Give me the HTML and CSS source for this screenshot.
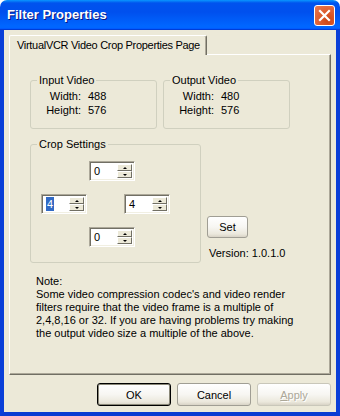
FILE: index.html
```html
<!DOCTYPE html>
<html>
<head>
<meta charset="utf-8">
<link rel="stylesheet" href="styles.css">
</head>
<body>
<div class="window">
  <div class="titlebar">
    <span class="title">Filter Properties</span>
    <span class="close">
      <svg width="21" height="21" viewBox="0 0 21 21">
        <path d="M6 6 L15 15 M15 6 L6 15" stroke="#fff" stroke-width="2.2" stroke-linecap="square"/>
      </svg>
    </span>
  </div>
  <div class="frame">
    <div class="client">
      <div class="tabs">
        <div class="tab">VirtualVCR Video Crop Properties Page</div>
      </div>
      <div class="panel">
        <div class="info-row">
          <fieldset class="group info">
            <legend>Input Video</legend>
            <div class="kv">
              <span class="k">Width:</span><span class="v">488</span>
              <span class="k">Height:</span><span class="v">576</span>
            </div>
          </fieldset>
          <fieldset class="group info">
            <legend>Output Video</legend>
            <div class="kv">
              <span class="k">Width:</span><span class="v">480</span>
              <span class="k">Height:</span><span class="v">576</span>
            </div>
          </fieldset>
        </div>
        <div class="crop-row">
          <fieldset class="group crop">
            <legend>Crop Settings</legend>
            <div class="spin-row center">
              <div class="spin"><span class="val">0</span><span class="arrows"><span class="arr up"></span><span class="arr down"></span></span></div>
            </div>
            <div class="spin-row sides">
              <div class="spin"><span class="val"><span class="sel">4</span></span><span class="arrows"><span class="arr up"></span><span class="arr down"></span></span></div>
              <div class="spin"><span class="val">4</span><span class="arrows"><span class="arr up"></span><span class="arr down"></span></span></div>
            </div>
            <div class="spin-row center">
              <div class="spin"><span class="val">0</span><span class="arrows"><span class="arr up"></span><span class="arr down"></span></span></div>
            </div>
          </fieldset>
          <div class="side">
            <button class="btn set">Set</button>
            <div class="version">Version: 1.0.1.0</div>
          </div>
        </div>
        <div class="note">
          Note:<br>
          Some video compression codec's and video render<br>
          filters require that the video frame is a multiple of<br>
          2,4,8,16 or 32. If you are having problems try making<br>
          the output video size a multiple of the above.
        </div>
      </div>
      <div class="buttons">
        <button class="btn dlg default">OK</button>
        <button class="btn dlg">Cancel</button>
        <button class="btn dlg disabled"><u>A</u>pply</button>
      </div>
    </div>
  </div>
</div>
</body>
</html>
```
FILE: styles.css
```css
* { box-sizing: border-box; }
html, body { margin: 0; padding: 0; }
body {
  font-family: "Liberation Sans", Arial, sans-serif;
  font-size: 11px;
  color: #000;
  background: #fff;
}
.window {
  width: 340px;
  height: 416px;
  display: flex;
  flex-direction: column;
}
.titlebar {
  height: 30px;
  flex: none;
  display: flex;
  align-items: center;
  justify-content: space-between;
  padding: 0 5px 0 7px;
  background: linear-gradient(180deg, #0997ff 0%, #0053ee 10%, #0050ee 40%, #0066ff 86%, #0066ff 92%, #005bff 95%, #003dd7 97%, #003dd7 100%);
  border-radius: 7px 7px 0 0;
}
.title {
  color: #fff;
  font-weight: bold;
  font-size: 13px;
  text-shadow: 1px 1px 0 #0a1883;
  padding-bottom: 1px;
}
.close {
  width: 21px;
  height: 21px;
  border: 1px solid #fff;
  border-radius: 3px;
  background: radial-gradient(circle at 70% 75%, #cc4614 0%, #dc5a2c 40%, #e97a52 100%);
  display: flex;
  margin-top: 1px;
}
.close svg { display: block; margin: -1px; }
.frame {
  flex: 1;
  display: flex;
  border-left: 4px solid #0a3fd8;
  border-right: 4px solid #0a3fd8;
  border-bottom: 4px solid #0a3cd2;
}
.client {
  flex: 1;
  background: #ece9d8;
  padding: 5px 5px 6px 5px;
  display: flex;
  flex-direction: column;
}
.tabs {
  display: flex;
  height: 19px;
  flex: none;
  position: relative;
  z-index: 2;
}
.tab {
  width: 198px;
  height: 20px;
  background: #ece9d8;
  border-top: 1px solid #fff;
  border-left: 1px solid #fff;
  border-right: 1px solid #716f64;
  box-shadow: inset -1px 0 0 #aca899;
  border-radius: 2px 2px 0 0;
  padding: 3px 0 0 7px;
  white-space: nowrap;
  letter-spacing: -0.3px;
}
.panel {
  flex: 1;
  border-top: 1px solid #fff;
  border-left: 1px solid #fff;
  border-right: 1px solid #716f64;
  border-bottom: 1px solid #716f64;
  box-shadow: inset -1px -1px 0 #aca899;
  padding: 19px 0 0 20px;
  display: flex;
  flex-direction: column;
}
.group {
  margin: 0;
  border: 1px solid #d0d0bf;
  border-radius: 3px;
  padding: 0;
  min-width: 0;
}
.group legend {
  padding: 0 2px;
  margin-left: 6px;
  line-height: 13px;
}
.info-row {
  display: flex;
  gap: 6px;
}
.info {
  width: 127px;
  height: 55px;
  padding-top: 2px;
}
.kv {
  display: grid;
  grid-template-columns: 50px auto;
  column-gap: 7px;
  line-height: 14px;
}
.k { text-align: right; }
.crop-row {
  display: flex;
  margin-top: 9px;
  gap: 6px;
}
.crop {
  width: 171px;
  height: 125px;
  padding-top: 10px;
}
.spin-row { display: flex; }
.spin-row.center { padding-left: 58px; }
.spin-row.sides { padding-left: 10px; gap: 37px; margin: 13px 0; }
.spin {
  width: 46px;
  height: 20px;
  background: #fff;
  display: flex;
  border-top: 1px solid #aca899;
  border-left: 1px solid #aca899;
  border-right: 1px solid #fff;
  border-bottom: 1px solid #fff;
  box-shadow: inset 1px 1px 0 #716f64, inset -1px -1px 0 #f1efe2;
  padding: 2px;
}
.val {
  flex: 1;
  line-height: 14px;
  padding-left: 2px;
}
.sel {
  background: #316ac5;
  color: #fff;
  padding: 0 1px;
  display: inline-block;
  line-height: 14px;
}
.arrows {
  width: 15px;
  display: flex;
  flex-direction: column;
}
.arr {
  flex: 1;
  background: #ece9d8;
  border-top: 1px solid #fff;
  border-left: 1px solid #fff;
  border-right: 1px solid #716f64;
  border-bottom: 1px solid #716f64;
  display: flex;
  align-items: center;
  justify-content: center;
}
.arr::after {
  content: "";
  width: 0;
  height: 0;
  border-left: 2px solid transparent;
  border-right: 2px solid transparent;
}
.arr.up::after { border-bottom: 2px solid #000; }
.arr.down::after { border-top: 2px solid #000; }
.side {
  display: flex;
  flex-direction: column;
  align-items: flex-start;
  padding-top: 78px;
}
.btn {
  font-family: "Liberation Sans", Arial, sans-serif;
  font-size: 11px;
  color: #000;
  border: 1px solid #a09e94;
  border-radius: 3px;
  background: linear-gradient(180deg, #ffffff 0%, #f7f6f2 50%, #ebe8dc 85%, #d8d3c6 100%);
  padding: 0;
  margin: 0;
}
.set {
  width: 41px;
  height: 22px;
}
.version {
  margin-top: 8px;
  margin-left: 2px;
  line-height: 14px;
}
.note {
  margin-top: 12px;
  padding-left: 6px;
  line-height: 13px;
  white-space: nowrap;
}
.buttons {
  display: flex;
  justify-content: flex-end;
  gap: 6px;
  margin-top: 8px;
  height: 23px;
  flex: none;
}
.dlg {
  width: 74px;
  height: 23px;
}
.default {
  border: 1px solid #000;
  box-shadow: inset 0 0 0 1px #8a8878;
}
.disabled {
  color: #aca899;
  border-color: #c9c7ba;
  text-shadow: 1px 1px 0 #fff;
}
```
